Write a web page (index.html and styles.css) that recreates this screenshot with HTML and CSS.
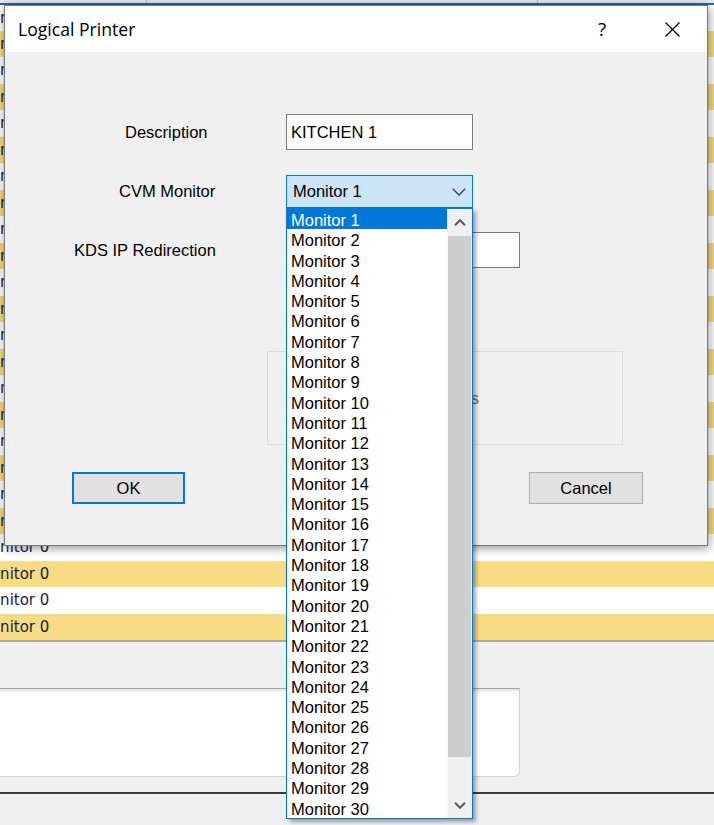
FILE: index.html
```html
<!DOCTYPE html>
<html>
<head>
<meta charset="utf-8">
<link rel="stylesheet" href="styles.css">
</head>
<body>
<div class="desk">
  <div class="grid-head"><div class="hc hc1"></div><div class="hc hc2"></div></div>
  <div class="rows">
    <div class="row first"><span class="cell">Monitor 0</span></div>
    <div class="row"><span class="cell">Monitor 0</span></div>
    <div class="row"><span class="cell">Monitor 0</span></div>
    <div class="row"><span class="cell">Monitor 0</span></div>
    <div class="row"><span class="cell">Monitor 0</span></div>
    <div class="row"><span class="cell">Monitor 0</span></div>
    <div class="row"><span class="cell">Monitor 0</span></div>
    <div class="row"><span class="cell">Monitor 0</span></div>
    <div class="row"><span class="cell">Monitor 0</span></div>
    <div class="row"><span class="cell">Monitor 0</span></div>
    <div class="row"><span class="cell">Monitor 0</span></div>
    <div class="row"><span class="cell">Monitor 0</span></div>
    <div class="row"><span class="cell">Monitor 0</span></div>
    <div class="row"><span class="cell">Monitor 0</span></div>
    <div class="row"><span class="cell">Monitor 0</span></div>
    <div class="row"><span class="cell">Monitor 0</span></div>
    <div class="row"><span class="cell">Monitor 0</span></div>
    <div class="row"><span class="cell">Monitor 0</span></div>
    <div class="row"><span class="cell">Monitor 0</span></div>
    <div class="row"><span class="cell">Monitor 0</span></div>
    <div class="row"><span class="cell">Monitor 0</span></div>
    <div class="row"><span class="cell">Monitor 0</span></div>
    <div class="row"><span class="cell">Monitor 0</span></div>
    <div class="row"><span class="cell">Monitor 0</span></div>
  </div>
  <div class="grid-end"></div>
  <div class="gap1"></div>
  <div class="panel"></div>
  <div class="gap2"></div>
  <div class="dark"></div>
</div>

<div class="dialog">
  <div class="titlebar">
    <div class="title">Logical Printer</div>
    <div class="tbtn help">?</div>
    <div class="tbtn close">
      <svg width="15" height="15" viewBox="0 0 15 15"><path d="M0.5 0.5 L14.5 14.5 M14.5 0.5 L0.5 14.5" fill="none" stroke="#000" stroke-width="1.2"/></svg>
    </div>
  </div>
  <div class="dbody">
    <div class="frow frow-desc">
      <div class="lbl lbl-desc">Description</div>
      <div class="input input-desc">KITCHEN 1</div>
    </div>
    <div class="frow frow-cvm">
      <div class="lbl lbl-cvm">CVM Monitor</div>
      <div class="combo-wrap">
        <div class="combo">
          <span>Monitor 1</span>
          <svg width="14" height="8" viewBox="0 0 14 8"><path d="M0.8 0.8 L7 7 L13.2 0.8" fill="none" stroke="#3a3a3a" stroke-width="1.3"/></svg>
        </div>
        <div class="listbox">
          <div class="items">
            <div class="item sel">Monitor 1</div>
            <div class="item">Monitor 2</div>
            <div class="item">Monitor 3</div>
            <div class="item">Monitor 4</div>
            <div class="item">Monitor 5</div>
            <div class="item">Monitor 6</div>
            <div class="item">Monitor 7</div>
            <div class="item">Monitor 8</div>
            <div class="item">Monitor 9</div>
            <div class="item">Monitor 10</div>
            <div class="item">Monitor 11</div>
            <div class="item">Monitor 12</div>
            <div class="item">Monitor 13</div>
            <div class="item">Monitor 14</div>
            <div class="item">Monitor 15</div>
            <div class="item">Monitor 16</div>
            <div class="item">Monitor 17</div>
            <div class="item">Monitor 18</div>
            <div class="item">Monitor 19</div>
            <div class="item">Monitor 20</div>
            <div class="item">Monitor 21</div>
            <div class="item">Monitor 22</div>
            <div class="item">Monitor 23</div>
            <div class="item">Monitor 24</div>
            <div class="item">Monitor 25</div>
            <div class="item">Monitor 26</div>
            <div class="item">Monitor 27</div>
            <div class="item">Monitor 28</div>
            <div class="item">Monitor 29</div>
            <div class="item">Monitor 30</div>
          </div>
          <div class="sbar">
            <div class="sbtn"><svg width="12" height="7" viewBox="0 0 12 7"><path d="M1 6.2 L6 1.2 L11 6.2" fill="none" stroke="#5a5a5a" stroke-width="2"/></svg></div>
            <div class="thumb"></div>
            <div class="track"></div>
            <div class="sbtn"><svg width="12" height="7" viewBox="0 0 12 7"><path d="M1 0.8 L6 5.8 L11 0.8" fill="none" stroke="#5a5a5a" stroke-width="2"/></svg></div>
          </div>
        </div>
      </div>
    </div>
    <div class="frow frow-kds">
      <div class="lbl lbl-kds">KDS IP Redirection</div>
      <div class="input input-kds"></div>
    </div>
    <div class="group">
      <div class="glabel">Timeout Seconds</div>
    </div>
    <div class="btns">
      <div class="btn btn-ok">OK</div>
      <div class="btn btn-cancel">Cancel</div>
    </div>
  </div>
</div>
</body>
</html>
```

FILE: styles.css
```css
* { box-sizing: border-box; }
html, body { margin: 0; padding: 0; }
body {
  width: 714px;
  height: 825px;
  overflow: hidden;
  position: relative;
  background: #f0f0f0;
  font-family: "Liberation Sans", Arial, sans-serif;
  font-size: 16.5px;
  color: #000;
}

/* background window */
.grid-head { height: 3px; display: flex; background: #e9e9e9; }
.hc { border-right: 1px solid #c4c4c4; height: 3px; }
.hc1 { width: 147px; }
.hc2 { width: 391px; }

.row {
  height: 26.5px;
  display: flex;
  align-items: center;
  background: #ffffff;
  font-family: "DejaVu Sans", sans-serif;
  font-size: 15px;
  color: #1b1b3e;
  white-space: nowrap;
  overflow: hidden;
}
.row:nth-child(even) { background: #f7dc83; }
.row.first { height: 27.5px; border-top: 2px solid #2a63b6; }
.cell { margin-left: -22px; }

.grid-end { height: 2px; background: #a9a9a9; }
.gap1 { height: 46px; }
.panel {
  height: 89px;
  width: 520px;
  background: #fff;
  border-top: 1px solid #a4a4a4;
  border-right: 1px solid #d2d2d2;
  border-bottom: 1px solid #d2d2d2;
  border-bottom-right-radius: 6px;
  box-shadow: inset 0 4px 4px -3px rgba(0,0,0,0.18);
}
.gap2 { height: 15px; }
.dark { height: 2px; background: #3a3a3a; }

/* dialog */
.dialog {
  position: absolute;
  left: 4px;
  top: 5px;
  width: 704px;
  height: 541px;
  border: 1px solid #7a7a7a;
  background: #f0f0f0;
  box-shadow: 0 0 10px rgba(0,0,0,0.28), 2px 4px 8px rgba(0,0,0,0.18);
  display: flex;
  flex-direction: column;
}
.titlebar {
  height: 46px;
  background: #fff;
  display: flex;
  align-items: center;
}
.title {
  flex: 1;
  padding-left: 13px;
  font-family: "Open Sans", sans-serif;
  font-size: 17.6px;
  color: #000;
}
.tbtn {
  width: 70px;
  height: 46px;
  display: flex;
  align-items: center;
  justify-content: center;
}
.help {
  font-family: "Open Sans", sans-serif;
  font-size: 19px;
}

.dbody {
  flex: 1;
  display: flex;
  flex-direction: column;
}
.frow { display: flex; align-items: center; }
.frow-desc { margin-top: 62px; height: 36px; }
.frow-cvm { margin-top: 25px; height: 33px; }
.frow-kds { margin-top: 24px; height: 36px; }

.lbl { width: 281px; white-space: nowrap; }
.lbl-desc { padding-left: 120px; }
.lbl-cvm { padding-left: 114px; }
.lbl-kds { padding-left: 69px; }

.input {
  height: 36px;
  background: #fff;
  border: 1px solid #7a7a7a;
  padding-left: 4px;
  display: flex;
  align-items: center;
}
.input-desc { width: 187px; }
.input-kds { width: 234px; }

.combo-wrap { position: relative; width: 187px; height: 33px; }
.combo {
  height: 33px;
  border: 1px solid #0078d7;
  background: #cce4f7;
  display: flex;
  align-items: center;
  justify-content: space-between;
  padding-left: 6px;
  padding-right: 6px;
}
.listbox {
  position: absolute;
  left: 0;
  top: 33px;
  width: 187px;
  height: 611px;
  border: 1px solid #0078d7;
  background: #fff;
  display: flex;
  box-shadow: 3px 3px 4px rgba(0,0,0,0.35);
  z-index: 5;
}
.items { width: 160px; }
.item {
  height: 20.3px;
  line-height: 20.3px;
  padding-left: 4px;
  padding-top: 1px;
  white-space: nowrap;
}
.item.sel { background: #0078d7; color: #fff; }
.sbar {
  width: 25px;
  background: #f0f0f0;
  display: flex;
  flex-direction: column;
}
.sbtn {
  height: 26px;
  display: flex;
  align-items: center;
  justify-content: center;
}
.thumb { height: 521px; margin: 1px 1px 0 1px; background: #cdcdcd; }
.track { flex: 1; }

.group {
  margin-top: 83px;
  margin-left: 262px;
  width: 356px;
  height: 94px;
  border: 1px solid #dcdcdc;
  display: flex;
  align-items: center;
}
.glabel {
  width: 211px;
  text-align: right;
  color: #6d6d6d;
  white-space: nowrap;
}

.btns {
  margin-top: 27px;
  display: flex;
  justify-content: space-between;
  padding: 0 64px 0 67px;
}
.btn {
  height: 32px;
  background: #e1e1e1;
  display: flex;
  align-items: center;
  justify-content: center;
}
.btn-ok { width: 113px; border: 2px solid #0078d7; }
.btn-cancel { width: 114px; border: 1px solid #adadad; }
```
